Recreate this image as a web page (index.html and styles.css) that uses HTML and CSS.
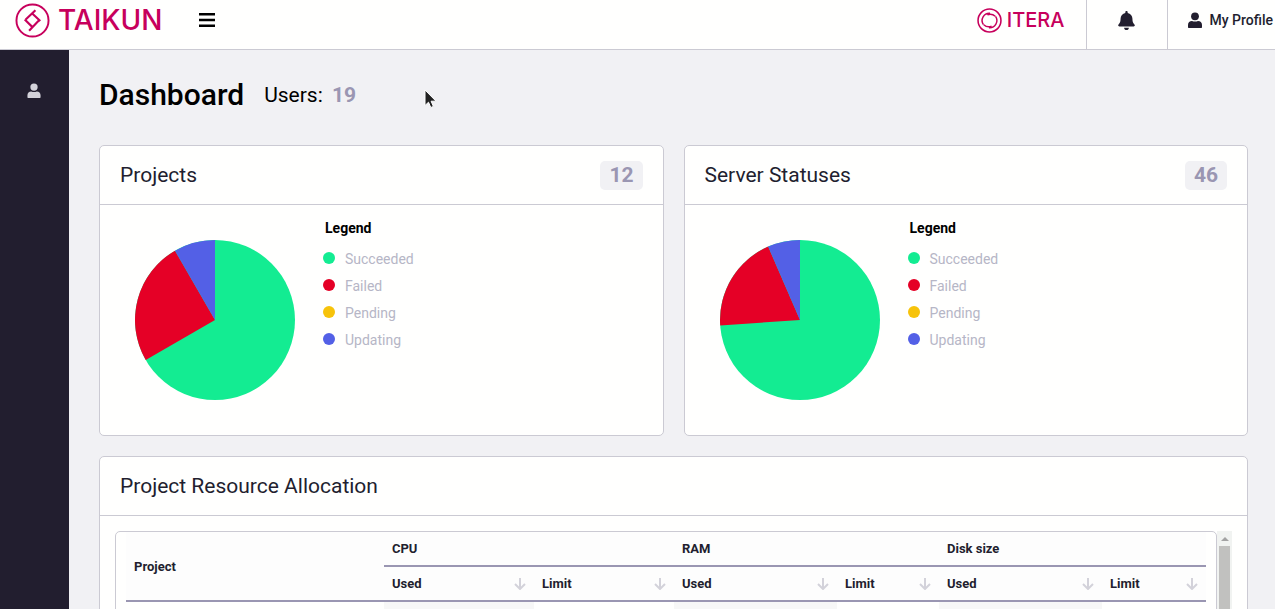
FILE: index.html
```
<!DOCTYPE html>
<html lang="en">
<head>
<meta charset="utf-8">
<title>Taikun – Dashboard</title>
<link rel="stylesheet" href="styles.css">
</head>
<body>
<svg class="defs" aria-hidden="true">
  <symbol id="user" viewBox="0 0 14 16"><circle cx="7" cy="4.300" r="3.900"/><path d="M0 15.300v-2.300c0-2.400 1.700-4 4-4 1.900.8 4.100.8 6 0 2.300 0 4 1.600 4 4v2.300q0 .7-.7.700H.7q-.7 0-.7-.7z"/></symbol>
  <symbol id="down" viewBox="0 0 12 12"><path d="M6 0v11M1 6l5 5 5-5" fill="none" stroke="currentColor" stroke-width="2"/></symbol>
</svg>
<header class="topbar">
  <a class="brand" href="#" aria-label="Taikun home">
    <svg class="brand-mark line" viewBox="0 0 36 36"><circle cx="18" cy="18" r="16.500" stroke-width="2"/><path d="M21 7.500 11 17M18 11l8 7.500M24.500 18 14.500 28.500M10 17l8 7.800" stroke-width="2.200"/></svg>
    <span class="wordmark">TAIKUN</span>
  </a>
  <button class="menu" aria-label="Toggle menu"><svg viewBox="0 0 16 14"><path d="M0 0h16v2.500H0zM0 5.800h16v2.500H0zM0 11.500h16V14H0z"/></svg></button>
  <a class="partner" href="#" aria-label="Itera">
    <svg class="partner-mark line" viewBox="0 0 24 24"><circle cx="12" cy="12" r="11" stroke-width="1.500"/><path d="M6.200 16A7 7 0 0 1 12.500 5M10 6.500A7 7 0 0 1 17.500 8M17.800 8A7 7 0 0 1 11.500 19M14 17.500A7 7 0 0 1 6.500 16" stroke-width="1.400"/></svg>
    <span class="partner-name">ITERA</span>
  </a>
  <button class="bell" aria-label="Notifications"><svg viewBox="0 0 448 512"><path d="M224 512c35.320 0 63.970-28.650 63.970-64H160.030c0 35.350 28.650 64 63.970 64zm215.390-149.710c-19.320-20.760-55.470-51.990-55.470-154.290 0-77.700-54.480-139.900-127.940-155.160V32c0-17.670-14.320-32-31.980-32s-31.980 14.330-31.980 32v20.840C118.560 68.100 64.080 130.300 64.080 208c0 102.300-36.150 133.530-55.470 154.290-6 6.450-8.660 14.160-8.610 21.710.11 16.400 12.980 32 32.100 32h383.800c19.120 0 32-15.600 32.100-32 .05-7.550-2.610-15.270-8.610-21.710z"/></svg></button>
  <button class="profile"><svg><use href="#user"/></svg>My Profile</button>
</header>
<div class="shell">
  <nav class="sidebar"><a href="#" aria-label="Users"><svg><use href="#user"/></svg></a></nav>
  <main class="content">
    <div class="title-row"><h1>Dashboard</h1><p>Users: <strong>19</strong></p></div>
    <div class="cards">
      <section class="card">
        <header><h2>Projects</h2><span class="badge">12</span></header>
        <div class="chart">
          <svg class="pie" viewBox="-80 -80 160 160"><circle r="80" fill="#13ec92"/><path d="M0 0-69.280 40A80 80 0 0 1-40-69.280z" fill="#e50026"/><path d="M0 0-40-69.280A80 80 0 0 1 0-80z" fill="#5360e6"/></svg>
          <div class="legend"><h3>Legend</h3><ul><li class="ok">Succeeded</li><li class="fail">Failed</li><li class="wait">Pending</li><li class="update">Updating</li></ul></div>
        </div>
      </section>
      <section class="card">
        <header><h2>Server Statuses</h2><span class="badge">46</span></header>
        <div class="chart">
          <svg class="pie" viewBox="-80 -80 160 160"><circle r="80" fill="#13ec92"/><path d="M0 0-79.800 5.450A80 80 0 0 1-31.830-73.390z" fill="#e50026"/><path d="M0 0-31.830-73.390A80 80 0 0 1 0-80z" fill="#5360e6"/></svg>
          <div class="legend"><h3>Legend</h3><ul><li class="ok">Succeeded</li><li class="fail">Failed</li><li class="wait">Pending</li><li class="update">Updating</li></ul></div>
        </div>
      </section>
    </div>
    <section class="card">
      <header><h2>Project Resource Allocation</h2></header>
      <div class="scroller">
        <div class="table-box">
          <table>
            <colgroup><col><col class="c150"><col class="c140"><col class="c163"><col class="c102"><col class="c163"><col class="c104"></colgroup>
            <thead>
              <tr><th rowspan="2">Project</th><th colspan="2">CPU</th><th colspan="2">RAM</th><th colspan="2">Disk size</th></tr>
              <tr>
                <th><button>Used<svg><use href="#down"/></svg></button></th><th><button>Limit<svg><use href="#down"/></svg></button></th>
                <th><button>Used<svg><use href="#down"/></svg></button></th><th><button>Limit<svg><use href="#down"/></svg></button></th>
                <th><button>Used<svg><use href="#down"/></svg></button></th><th><button>Limit<svg><use href="#down"/></svg></button></th>
              </tr>
            </thead>
            <tbody><tr><td></td><td></td><td></td><td></td><td></td><td></td><td></td></tr></tbody>
          </table>
        </div>
        <div class="scrollbar" aria-hidden="true"><i class="arrow"></i><i class="thumb"></i></div>
      </div>
    </section>
  </main>
</div>
<svg class="pointer" viewBox="0 0 12 20" aria-hidden="true"><path d="M1 1v15.500l3.500-3.300 2.300 5.300 2.600-1.100-2.300-5.200H12z" fill="#222" stroke="#fff"/></svg>
</body>
</html>
```
FILE: styles.css
```
* { box-sizing: border-box; margin: 0; padding: 0; }
html, body { height: 100%; overflow: hidden; }
body { display: flex; flex-direction: column; font-family: Roboto, sans-serif; font-size: 14px; color: #221e2f; background: #f1f1f4; }
button { border: 0; background: none; font: inherit; color: inherit; }
a { color: inherit; text-decoration: none; }
ul { list-style: none; }
svg { display: block; fill: currentColor; flex: none; }
svg.line { fill: none; stroke: currentColor; }
.defs { position: absolute; width: 0; height: 0; }

.topbar { display: flex; flex: none; height: 50px; background: #fffffe; border-bottom: 1px solid #cbcad3; }
.topbar > * { display: flex; align-items: center; height: 40px; }
.brand { gap: 8px; width: 199px; padding-left: 15px; color: #c7005c; }
.brand-mark { width: 35px; height: 35px; }
.wordmark { font-family: Inter, sans-serif; font-size: 28px; font-weight: 500; }
.menu svg { width: 16px; height: 14px; color: #000; }
.partner { gap: 5px; margin-left: auto; padding-right: 21px; color: #c7005c; }
.partner-mark { width: 25px; height: 25px; }
.partner-name { font-family: Inter, sans-serif; font-size: 20px; font-weight: 500; }
.topbar .bell, .topbar .profile { height: 49px; padding-bottom: 9px; border-left: 1px solid #cbcad3; }
.bell { width: 81px; justify-content: center; }
.bell svg { width: 17px; height: 19px; }
.profile { gap: 8px; padding-left: 20px; padding-right: 2px; font-weight: 500; white-space: nowrap; }
.profile svg { width: 14px; height: 16px; }

.shell { display: flex; flex: 1; min-height: 0; }
.sidebar { flex: none; width: 69px; padding: 33px 0 0 27px; background: #221e2f; color: #d3d2da; }
.sidebar svg { width: 14px; height: 15px; }
.content { flex: 1; min-width: 0; padding: 0 27px 0 30px; overflow: hidden; }
.title-row { display: flex; align-items: center; gap: 20px; height: 95px; padding-bottom: 5px; color: #000; }
h1 { padding-bottom: 2px; font-size: 30px; font-weight: 500; }
.title-row p { font-size: 21px; }
.title-row strong { margin-left: 4px; color: #9a96b2; }
.cards { display: grid; grid-template-columns: 1fr 1fr; gap: 20px; margin-bottom: 20px; }
.card { border: 1px solid #cbcad3; border-radius: 5px; background: #fffffe; overflow: hidden; }
.card > header { display: flex; align-items: center; justify-content: space-between; height: 59px; padding: 0 20px; border-bottom: 1px solid #cbcad3; }
h2 { font-size: 21px; font-weight: 400; }
.badge { padding: 0 9px; border-radius: 5px; background: #f1f1f4; color: #9a96b2; font-size: 21px; font-weight: 700; line-height: 29px; }
.chart { display: flex; gap: 28px; height: 230px; padding: 15px 35px; }
.pie { width: 160px; height: 160px; margin-top: 20px; }
.legend h3 { padding-left: 2px; color: #000; font-size: 14px; font-weight: 700; line-height: 16px; margin-bottom: 10px; }
.legend li { display: flex; align-items: center; gap: 10px; color: #b6b6c6; line-height: 27px; }
.legend li::before { content: ""; width: 12px; height: 12px; margin-bottom: 3px; border-radius: 50%; background: var(--dot); }
.ok { --dot: #13ec92; }
.fail { --dot: #e50026; }
.wait { --dot: #f7c30a; }
.update { --dot: #5360e6; }

.scroller { display: flex; height: 300px; padding: 15px 15px 0; }
.table-box { flex: 1; min-width: 0; padding: 0 10px; border: 1px solid #cbcad3; border-radius: 5px; }
table { width: 100%; table-layout: fixed; border-collapse: separate; border-spacing: 0; font-size: 13px; }
.c150 { width: 150px; } .c140 { width: 140px; } .c163 { width: 163px; } .c102 { width: 102px; } .c104 { width: 104px; }
th { height: 35px; padding: 0 8px; border-bottom: 2px solid #9a96b2; background: #fdfdfd; text-align: left; font-weight: 700; }
th button { display: flex; width: 100%; align-items: center; justify-content: space-between; }
th svg { width: 12px; height: 12px; color: #d3d2da; }
td { height: 35px; }
td:nth-child(even) { background: #f7f7f7; }
.scrollbar { display: flex; flex-direction: column; align-items: center; width: 15px; background: #f1f3f1; }
.arrow { margin: 6px 0 5px; border: 4px solid transparent; border-top: 0; border-bottom-color: #a3a3a3; }
.thumb { flex: 1; width: 11px; background: #c1c1bf; }
.pointer { position: absolute; left: 424px; top: 89px; width: 12px; height: 20px; }
```
